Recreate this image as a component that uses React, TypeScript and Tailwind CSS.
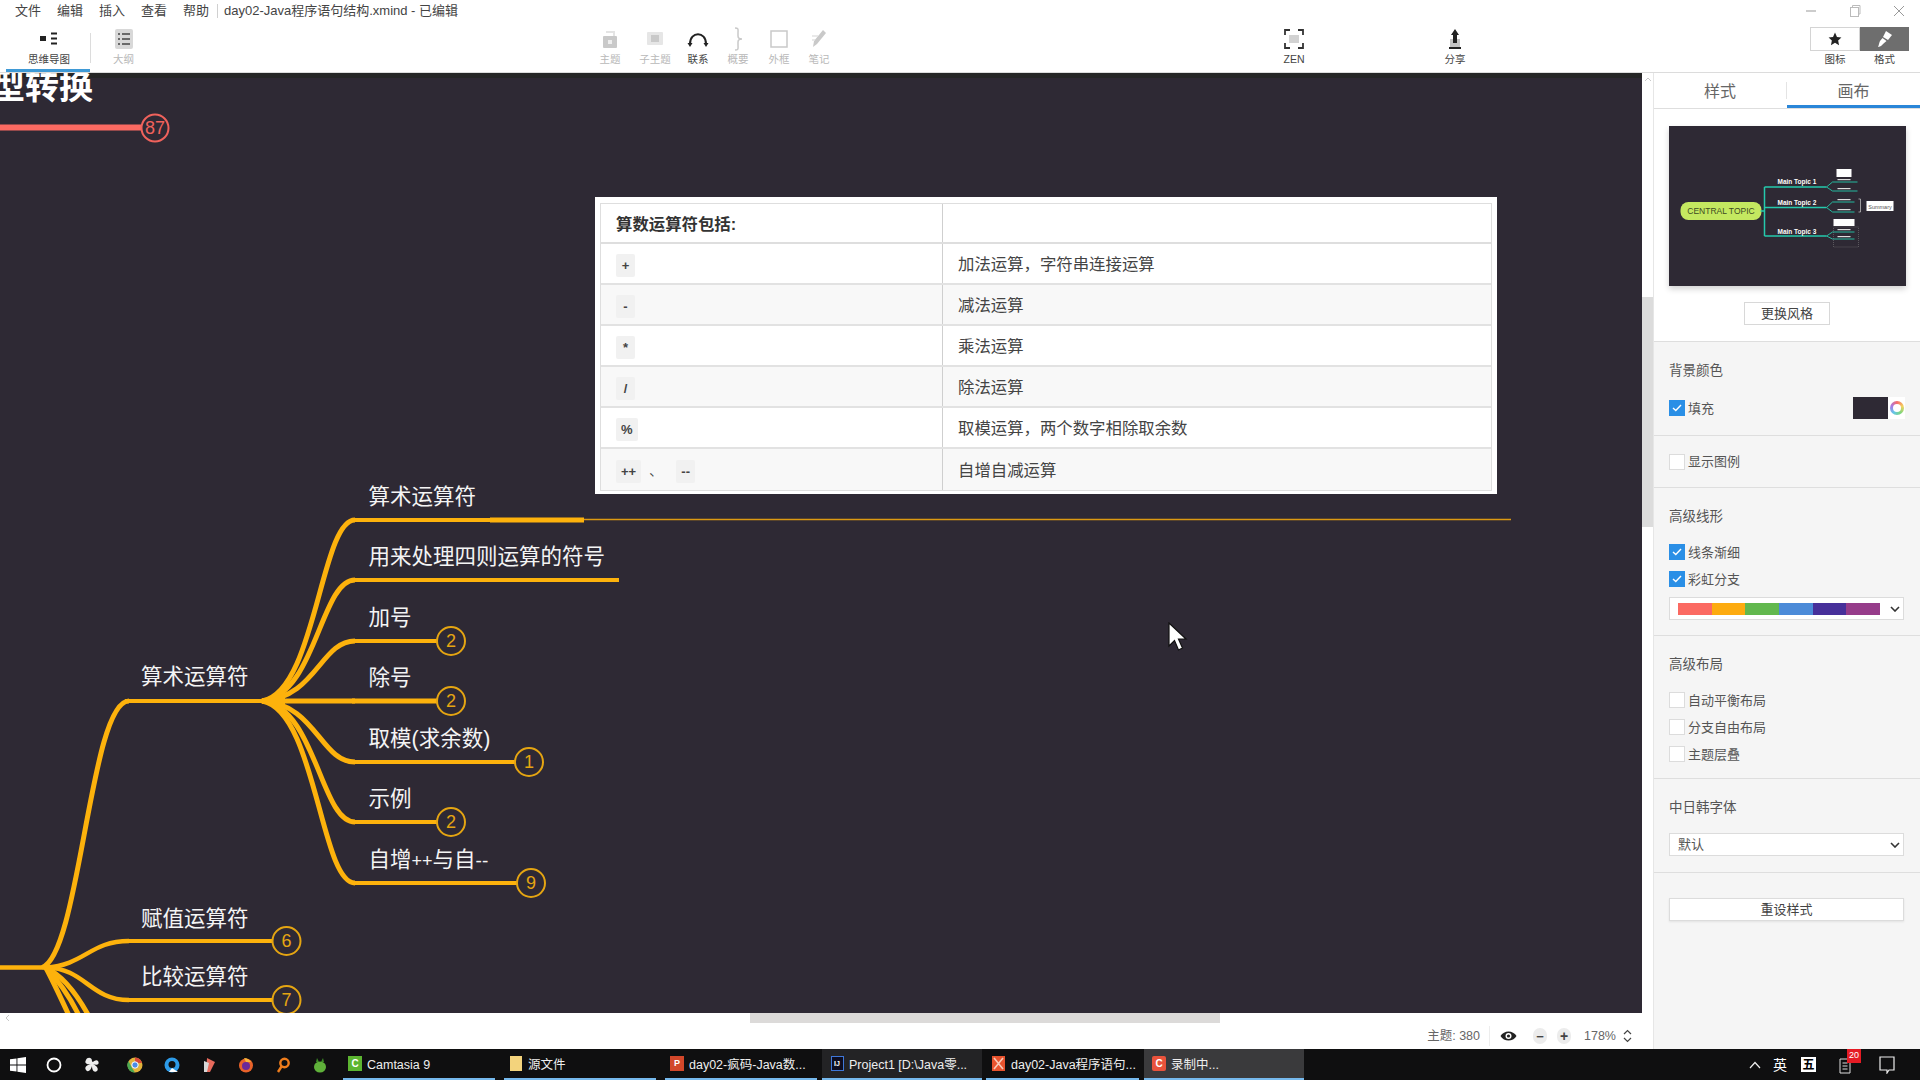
import React from "react";

const ORANGE = "#fdb20c";
const CIRCLE = "#e5a512";

function curve(x0: number, y0: number, x1: number, y1: number) {
  const dx = x1 - x0;
  return `M${x0} ${y0} C${x0 + dx * 0.58} ${y0 + (y1 - y0) * 0.05} ${x0 + dx * 0.63} ${y1} ${x1} ${y1}`;
}

const subs: { y: number; end: number; key: string; label: React.ReactNode; ty: number; n?: string; cx?: number }[] = [
  { y: 520, end: 584, key: "a", label: "算术运算符", ty: 496 },
  { y: 580, end: 619, key: "b", label: "用来处理四则运算的符号", ty: 556 },
  { y: 641, end: 440, key: "c", label: "加号", ty: 617, n: "2", cx: 451 },
  { y: 701, end: 440, key: "d", label: "除号", ty: 677, n: "2", cx: 451 },
  { y: 762, end: 518, key: "e", label: "取模(求余数)", ty: 738, n: "1", cx: 529 },
  { y: 822, end: 440, key: "f", label: "示例", ty: 798, n: "2", cx: 451 },
  {
    y: 883,
    end: 520,
    key: "g",
    label: (
      <>
        自增<span className="text-[18px]">++</span>与自<span className="text-[19px]">--</span>
      </>
    ),
    ty: 859,
    n: "9",
    cx: 531,
  },
];

function NodeText({ x, cy, children }: { x: number; cy: number; children: React.ReactNode }) {
  return (
    <div
      className="absolute whitespace-nowrap text-[21.5px] leading-[30px] text-[#f4f4f4]"
      style={{ left: x, top: cy - 14 }}
    >
      {children}
    </div>
  );
}

function MindMap() {
  return (
    <>
      <svg className="absolute left-0 top-0" width={1642} height={940} viewBox="0 73 1642 940" fill="none">
        <path d="M0 127.5 H142" stroke="#fb6a62" strokeWidth={6} />
        <circle cx={155} cy={128} r={13.5} fill="#2e2934" stroke="#f0625c" strokeWidth={2} />
        <path d="M0 967.5 H48" stroke={ORANGE} strokeWidth={4.5} />
        <path d="M42 967.5 C80 955 90 701 129 701" stroke={ORANGE} strokeWidth={5} />
        <path d="M125 701 H262" stroke={ORANGE} strokeWidth={4} />
        <path d="M46 967.5 C85 965 90 941 129 941" stroke={ORANGE} strokeWidth={4.5} />
        <path d="M125 941 H275" stroke={ORANGE} strokeWidth={4} />
        <path d="M46 967.5 C85 968 90 1000 129 1000" stroke={ORANGE} strokeWidth={4.5} />
        <path d="M125 1000 H275" stroke={ORANGE} strokeWidth={4} />
        <path d="M46 968 C62 975 78 995 92 1022" stroke={ORANGE} strokeWidth={5} />
        <path d="M46 968 C58 980 72 1000 82 1022" stroke={ORANGE} strokeWidth={5} />
        <path d="M46 968 C55 985 64 1005 72 1022" stroke={ORANGE} strokeWidth={5} />
        {subs.map((s) => (
          <g key={s.key}>
            <path d={curve(262, 701, 355, s.y)} stroke={ORANGE} strokeWidth={5} />
            <path d={`M352 ${s.y} H${s.end}`} stroke={ORANGE} strokeWidth={s.y === 701 ? 5 : 4} />
            {s.n && <circle cx={s.cx} cy={s.y} r={14} fill="#2e2934" stroke={CIRCLE} strokeWidth={2} />}
          </g>
        ))}
        <path d="M490 520 H584" stroke={ORANGE} strokeWidth={5} />
        <path d="M584 519.5 H1511" stroke="#dd9a12" strokeWidth={1.5} />
        <circle cx={286.5} cy={941} r={14} fill="#2e2934" stroke={CIRCLE} strokeWidth={2} />
        <circle cx={286.5} cy={1000} r={14} fill="#2e2934" stroke={CIRCLE} strokeWidth={2} />
        <path d="M255 701 L285 694 L285 708 Z" fill={ORANGE} />
      </svg>

      <div className="absolute left-[-9px] top-[-4px] whitespace-nowrap text-[34px] font-bold leading-[36px] text-white">型转换</div>
      <div className="absolute left-[141px] top-[41px] w-[28px] text-center text-[18px] leading-[28px] text-[#f0625c]">87</div>

      <NodeText x={141} cy={603}>算术运算符</NodeText>
      <NodeText x={141} cy={845}>赋值运算符</NodeText>
      <NodeText x={141} cy={903}>比较运算符</NodeText>
      {subs.map((s) => (
        <NodeText key={s.key} x={368.5} cy={s.ty - 73}>{s.label}</NodeText>
      ))}
      {subs.filter((s) => s.n).map((s) => (
        <div
          key={s.key + "n"}
          className="absolute w-[28px] text-center text-[18px] leading-[28px] text-[#e5a512]"
          style={{ left: s.cx! - 14, top: s.y - 73 - 14 }}
        >
          {s.n}
        </div>
      ))}
      <div className="absolute left-[272.5px] top-[854px] w-[28px] text-center text-[18px] leading-[28px] text-[#e5a512]">6</div>
      <div className="absolute left-[272.5px] top-[913px] w-[28px] text-center text-[18px] leading-[28px] text-[#e5a512]">7</div>
    </>
  );
}

const rows: { code: string[]; text: string }[] = [
  { code: ["+"], text: "加法运算，字符串连接运算" },
  { code: ["-"], text: "减法运算" },
  { code: ["*"], text: "乘法运算" },
  { code: ["/"], text: "除法运算" },
  { code: ["%"], text: "取模运算，两个数字相除取余数" },
  { code: ["++", "--"], text: "自增自减运算" },
];

function Chip({ children }: { children: React.ReactNode }) {
  return (
    <span className="mt-[2px] inline-flex h-[23px] min-w-[19px] items-center justify-center rounded-[2px] bg-[#f1f1f1] px-[5px] text-[13px] font-bold text-[#444]">
      {children}
    </span>
  );
}

function NoteTable() {
  return (
    <div className="absolute left-[595px] top-[124px] box-border h-[297px] w-[902px] bg-white px-[5px] pb-[3px] pt-[6px]">
      <div className="h-full border border-[#dedede] text-[16.4px] text-[#444]">
        <div className="flex h-[40px] border-b-2 border-[#dedede]">
          <div className="flex w-[342px] items-center border-r border-[#cfcfcf] pl-[15px] pt-[2px] font-bold text-[#333]">算数运算符包括:</div>
          <div className="flex-1" />
        </div>
        {rows.map((r, i) => (
          <div
            key={r.text}
            className={`flex h-[41px] border-b-2 border-[#e2e2e2] last:border-b-0 ${i % 2 === 1 ? "bg-[#f8f8f8]" : "bg-white"}`}
          >
            <div className="flex w-[342px] items-center border-r border-[#cfcfcf] pl-[15px] pt-[2px]">
              {r.code.length === 2 ? (
                <>
                  <Chip>{r.code[0]}</Chip>
                  <span className="ml-[8px] w-[27px] text-[13px]">、</span>
                  <Chip>{r.code[1]}</Chip>
                </>
              ) : (
                <Chip>{r.code[0]}</Chip>
              )}
            </div>
            <div className="flex flex-1 items-center pl-[15px] pt-[2px]">{r.text}</div>
          </div>
        ))}
      </div>
    </div>
  );
}

function Tool({ w, label, dim, children }: { w: number; label: string; dim?: boolean; children: React.ReactNode }) {
  return (
    <div className="flex shrink-0 flex-col items-center pt-[3px]" style={{ width: w }}>
      <div className="flex h-[24px] items-center justify-center">{children}</div>
      <div className={`text-[10.5px] leading-[16px] ${dim ? "text-[#b8b8b8]" : "text-[#444]"}`}>{label}</div>
    </div>
  );
}

function Header() {
  const dimIcon = "#c9c9c9";
  return (
    <div className="box-border h-[73px] shrink-0 border-b border-[#dcdcdc] bg-white">
      <div className="flex h-[24px] items-center pb-[2px] pl-[15px] text-[13px] text-[#444]">
        <span className="w-[42px]">文件</span>
        <span className="w-[42px]">编辑</span>
        <span className="w-[42px]">插入</span>
        <span className="w-[42px]">查看</span>
        <span className="w-[34px]">帮助</span>
        <span className="h-[14px] w-px bg-[#d0d0d0]" />
        <span className="ml-[6px]">day02-Java程序语句结构.xmind - 已编辑</span>
        <div className="ml-auto flex items-center pr-[15px]">
          <svg width={12} height={12} viewBox="0 0 12 12" className="mr-[32px]"><path d="M1 6H11" stroke="#999" /></svg>
          <svg width={12} height={14} viewBox="0 0 12 14" className="mr-[32px]"><rect x="1.5" y="3.5" width="8" height="9" fill="none" stroke="#bbb" /><path d="M3.5 3V1.5H11V10H10" fill="none" stroke="#bbb" /></svg>
          <svg width={12} height={12} viewBox="0 0 12 12"><path d="M1 1L11 11M11 1L1 11" stroke="#999" /></svg>
        </div>
      </div>
      <div className="flex h-[48px] pl-[6px]">
        <div className="box-border h-[48px] w-[84px] border-b-[3px] border-[#3f9ad6]">
          <Tool w={86} label="思维导图">
            <svg width={20} height={16} viewBox="0 0 20 16"><rect x="1" y="5" width="6" height="5" fill="#222" /><path d="M12 2.5H18M12 7.5H18M12 12.5H18" stroke="#222" strokeWidth="2" /></svg>
          </Tool>
        </div>
        <div className="mt-[9px] h-[30px] w-px bg-[#dcdcdc]" />
        <Tool w={65} label="大纲" dim>
          <svg width={20} height={22} viewBox="0 0 20 22"><rect x="1" y="1" width="18" height="20" rx="2" fill="#d8d8d8" /><path d="M4 6H6M8 6H16M4 11H6M8 11H16M4 16H6M8 16H16" stroke="#444" strokeWidth="1.6" /></svg>
        </Tool>
        <div className="w-[432px] shrink-0" />
        <Tool w={44} label="主题" dim>
          <svg width={18} height={20} viewBox="0 0 18 20"><path d="M5 3H13V7" fill="none" stroke="#e4e4e4" strokeWidth="2" /><rect x="2" y="7" width="14" height="12" rx="1" fill={dimIcon} /><rect x="7" y="11" width="4" height="4" fill="#eee" /></svg>
        </Tool>
        <Tool w={46} label="子主题" dim>
          <svg width={20} height={20} viewBox="0 0 20 20"><rect x="2" y="3" width="16" height="13" rx="1" fill="#e6e6e6" /><rect x="6" y="6" width="8" height="7" fill={dimIcon} /></svg>
        </Tool>
        <Tool w={40} label="联系">
          <svg width={22} height={18} viewBox="0 0 22 18" fill="none"><path d="M3 14C3 1 19 1 19 14" stroke="#222" strokeWidth="2" /><path d="M0.5 13L3 17L5.5 13ZM16.5 13L19 17L21.5 13Z" fill="#222" /></svg>
        </Tool>
        <Tool w={40} label="概要" dim>
          <svg width={12} height={24} viewBox="0 0 12 24" fill="none"><path d="M3 1C7 1 6 3 6 6V9C6 11 7 12 10 12C7 12 6 13 6 15V18C6 21 7 23 3 23" stroke={dimIcon} strokeWidth="1.5" /></svg>
        </Tool>
        <Tool w={42} label="外框" dim>
          <svg width={20} height={20} viewBox="0 0 20 20" fill="none"><rect x="2" y="2" width="16" height="16" stroke={dimIcon} strokeWidth="1.5" /></svg>
        </Tool>
        <Tool w={38} label="笔记" dim>
          <svg width={18} height={22} viewBox="0 0 18 22" fill="none"><path d="M13 2L16 5L7 16L3 19L4 13Z" fill={dimIcon} /><path d="M2 8H8M2 12H5" stroke="#e2e2e2" strokeWidth="1.5" /></svg>
        </Tool>
        <div className="w-[436px] shrink-0" />
        <Tool w={40} label="ZEN">
          <svg width={20} height={20} viewBox="0 0 20 20" fill="none"><path d="M1 6V1H6M14 1H19V6M19 14V19H14M6 19H1V14" stroke="#333" strokeWidth="1.8" /><rect x="5" y="6" width="10" height="8" fill="#d2d2d2" /></svg>
        </Tool>
        <div className="w-[121px] shrink-0" />
        <Tool w={40} label="分享">
          <svg width={16} height={22} viewBox="0 0 16 22"><rect x="3" y="11" width="10" height="8" fill="#c4c4c4" /><path d="M8 1L12 7H10V15H6V7H4Z" fill="#222" /><rect x="2" y="19" width="12" height="2" fill="#222" /></svg>
        </Tool>
        <div className="w-[335px] shrink-0" />
        <div className="flex flex-col">
          <div className="mt-[3px] box-border flex h-[24px] w-[99px]">
            <div className="flex w-[50px] items-center justify-center border border-[#d4d4d4] bg-white">
              <svg width={14} height={14} viewBox="0 0 24 24"><path d="M12 1L15.4 8.4L23 9.3L17.4 14.7L18.9 22.5L12 18.6L5.1 22.5L6.6 14.7L1 9.3L8.6 8.4Z" fill="#222" /></svg>
            </div>
            <div className="flex w-[49px] items-center justify-center bg-[#6e6e6e]">
              <svg width={16} height={18} viewBox="0 0 16 18"><path d="M9 1L15 5L11 10L6 7Z" fill="#fff" /><path d="M5.5 8L9.5 11L6 14C5 16 2 17 1 17C2 15 2 13 3 11Z" fill="#fff" /></svg>
            </div>
          </div>
          <div className="flex text-[10.5px] leading-[16px] text-[#444]">
            <span className="w-[50px] text-center">图标</span>
            <span className="w-[49px] text-center">格式</span>
          </div>
        </div>
      </div>
    </div>
  );
}

function Check({ on, label }: { on?: boolean; label: string }) {
  return (
    <div className="flex h-[22px] items-center pt-[1px] text-[13px] text-[#555]">
      <span className={`mr-[3px] mb-[1px] flex h-[16px] w-[16px] items-center justify-center ${on ? "bg-[#2a8fe6]" : "border border-[#dcdcdc] bg-white"}`}>
        {on && (
          <svg width={10} height={8} viewBox="0 0 10 8" fill="none"><path d="M1 4L3.8 6.6L9 1" stroke="#fff" strokeWidth="1.4" /></svg>
        )}
      </span>
      {label}
    </div>
  );
}

function Caret() {
  return (
    <svg width={10} height={6} viewBox="0 0 10 6" fill="none"><path d="M1 1L5 5L9 1" stroke="#333" strokeWidth="1.6" /></svg>
  );
}

function Title({ children }: { children: React.ReactNode }) {
  return <div className="h-[20px] text-[13.5px] leading-[20px] text-[#555]">{children}</div>;
}

function Preview() {
  const teal = "#25c9ac";
  return (
    <svg width={237} height={160} viewBox="0 0 237 160" className="block" fill="none">
      <rect width={237} height={160} fill="#2e2934" />
      <g transform="translate(-1.5 0)">
        <rect x={13} y={76} width={81} height={18} rx={8} fill="#c4e860" />
        <text x={53.5} y={88} textAnchor="middle" fontSize={8.5} fill="#3c4a22" fontFamily="Liberation Sans">CENTRAL TOPIC</text>
        <path d="M93 85H97M97 61V110M97 61H159M97 81.5H159M97 110H159" stroke={teal} strokeWidth={1.5} />
        <path d="M159 61L165 56H190M159 61L165 65H190M159 81.5L165 76H187M159 81.5L165 86H187M159 110L165 106H187M159 110L165 113H187" stroke={teal} strokeWidth={0.9} />
        <text x={110} y={58} fontSize={6.5} fontWeight={700} fill="#fff" fontFamily="Liberation Sans">Main Topic 1</text>
        <text x={110} y={79} fontSize={6.5} fontWeight={700} fill="#fff" fontFamily="Liberation Sans">Main Topic 2</text>
        <text x={110} y={108} fontSize={6.5} fontWeight={700} fill="#fff" fontFamily="Liberation Sans">Main Topic 3</text>
        <rect x={169} y={43} width={15} height={8} fill="#fff" />
        <rect x={170} y={53} width={13} height={1.2} fill="#ddd" />
        <rect x={170} y={62} width={13} height={1.2} fill="#ddd" />
        <rect x={170} y={73} width={13} height={1.2} fill="#ddd" />
        <rect x={170} y={83} width={13} height={1.2} fill="#ddd" />
        <path d="M191 73H193V86H191" stroke="#ccc" strokeWidth={0.7} />
        <rect x={199} y={75} width={27} height={10} fill="#fff" />
        <text x={212.5} y={82.5} textAnchor="middle" fontSize={5.5} fill="#555" fontFamily="Liberation Sans">Summary</text>
        <rect x={166} y={93} width={21} height={7} fill="#fff" />
        <rect x={166} y={101} width={25} height={20} stroke="#888" strokeWidth={0.5} strokeDasharray="1 1" />
        <rect x={170} y={103} width={13} height={1.2} fill="#ddd" />
        <rect x={170} y={110} width={13} height={1.2} fill="#ddd" />
      </g>
    </svg>
  );
}

function Panel() {
  return (
    <div className="flex w-[267px] shrink-0 flex-col border-l border-[#e6e6e6] bg-[#f5f5f5]">
      <div className="flex h-[36px] shrink-0 border-b border-[#dedede] bg-white text-[16px] text-[#666]">
        <div className="flex w-[132px] items-center justify-center pt-[2px]">
          样式
        </div>
        <div className="my-[9px] w-px bg-[#e4e4e4]" />
        <div className="flex flex-1 items-center justify-center border-b-[3px] border-[#2a86d8] pt-[5px]">画布</div>
      </div>
      <div className="box-border flex h-[233px] shrink-0 flex-col items-center border-b border-[#dedede] bg-white pt-[17px]">
        <div className="shadow-[0_3px_6px_rgba(0,0,0,0.18)]">
          <Preview />
        </div>
        <div className="mt-[16px] box-border flex h-[23px] w-[86px] items-center justify-center border border-[#d8d8d8] bg-white pt-[1px] text-[13px] text-[#444]">更换风格</div>
      </div>
      <div className="box-border h-[94px] shrink-0 border-b border-[#dedede] px-[15px] pt-[19px]">
        <Title>背景颜色</Title>
        <div className="mt-[16px] flex items-center justify-between">
          <Check on label="填充" />
          <div className="flex h-[22px] items-center">
            <div className="h-[22px] w-[35px] bg-[#2e2934]" />
            <div className="flex h-[22px] w-[17px] items-center justify-center bg-white">
              <div className="h-[14px] w-[14px] rounded-full bg-[conic-gradient(#f76b6b,#f4d35e,#7ed67e,#63c6e8,#a57be8,#f76b6b)] p-[3px]">
                <div className="h-full w-full rounded-full bg-white" />
              </div>
            </div>
          </div>
        </div>
      </div>
      <div className="box-border flex h-[52px] shrink-0 items-center border-b border-[#dedede] pl-[15px]">
        <Check label="显示图例" />
      </div>
      <div className="box-border h-[148px] shrink-0 border-b border-[#dedede] pl-[15px] pt-[19px]">
        <Title>高级线形</Title>
        <div className="mt-[14px]"><Check on label="线条渐细" /></div>
        <div className="mt-[5px]"><Check on label="彩虹分支" /></div>
        <div className="mt-[7px] box-border flex h-[23px] w-[235px] items-center border border-[#dcdcdc] bg-white pl-[8px] pr-[3px]">
          <div className="flex h-[12px] w-[202px]">
            <div className="flex-1 bg-[#fb6a62]" />
            <div className="flex-1 bg-[#fdab10]" />
            <div className="flex-1 bg-[#62b84e]" />
            <div className="flex-1 bg-[#4c8bd8]" />
            <div className="flex-1 bg-[#47309a]" />
            <div className="flex-1 bg-[#963c8a]" />
          </div>
          <div className="ml-auto flex"><Caret /></div>
        </div>
      </div>
      <div className="box-border h-[143px] shrink-0 border-b border-[#dedede] pl-[15px] pt-[19px]">
        <Title>高级布局</Title>
        <div className="mt-[14px]"><Check label="自动平衡布局" /></div>
        <div className="mt-[5px]"><Check label="分支自由布局" /></div>
        <div className="mt-[5px]"><Check label="主题层叠" /></div>
      </div>
      <div className="box-border h-[94px] shrink-0 border-b border-[#dedede] pl-[15px] pt-[19px]">
        <Title>中日韩字体</Title>
        <div className="mt-[15px] box-border flex h-[23px] w-[235px] items-center justify-between border border-[#dcdcdc] bg-white pt-[1px] pl-[8px] pr-[3px] text-[13px] text-[#555]">
          默认
          <Caret />
        </div>
      </div>
      <div className="pl-[15px] pt-[25px]">
        <div className="box-border flex h-[23px] w-[235px] items-center justify-center border border-[#dcdcdc] bg-white pt-[1px] text-[13px] text-[#444] shadow-[0_1px_2px_rgba(0,0,0,0.08)]">重设样式</div>
      </div>
    </div>
  );
}

function StatusBar() {
  return (
    <div className="flex h-[26px] shrink-0 items-center justify-end bg-white pr-[21px] text-[12.5px] text-[#666]">
      <span>主题: 380</span>
      <span className="ml-[9px] mr-[10px] h-[20px] w-px bg-[#ededed]" />
      <svg width={17} height={12} viewBox="0 0 17 12" className="mr-[16px]">
        <path d="M0.5 6C4 0 13 0 16.5 6C13 12 4 12 0.5 6Z" fill="#222" />
        <circle cx={8.5} cy={6} r={3} fill="#fff" />
        <circle cx={8.5} cy={6} r={1.6} fill="#222" />
      </svg>
      <span className="flex h-[16px] w-[14px] items-center justify-center rounded-full bg-[#ececec] text-[13px] font-bold leading-none text-[#444]">−</span>
      <span className="ml-[10px] flex h-[16px] w-[14px] items-center justify-center rounded-full bg-[#ececec] text-[14px] font-bold leading-none text-[#444]">+</span>
      <span className="ml-[13px] mr-[7px]">178%</span>
      <svg width={9} height={14} viewBox="0 0 9 14" fill="none"><path d="M1 5L4.5 1.5L8 5M1 9L4.5 12.5L8 9" stroke="#444" strokeWidth="1.2" /></svg>
    </div>
  );
}

function TaskBtn({ w, ml, label, bg, icon, pl = 5, gap = 5 }: { w: number; ml: number; label: string; bg?: string; icon: React.ReactNode; pl?: number; gap?: number }) {
  return (
    <div
      className="box-border flex h-[31px] shrink-0 items-center border-b-2 border-[#76b9ed] text-[12.5px] text-[#eeeeee]"
      style={{ width: w, marginLeft: ml, backgroundColor: bg, paddingLeft: pl }}
    >
      <span className="flex w-[14px] items-center justify-center" style={{ marginRight: gap }}>{icon}</span>
      <span className="whitespace-nowrap pt-[3px]">{label}</span>
    </div>
  );
}

function Taskbar() {
  return (
    <div className="flex h-[31px] shrink-0 items-center bg-[#0f0f10]">
      <div className="flex w-[343px] shrink-0 items-center">
        <svg width={16} height={16} viewBox="0 0 16 16" className="ml-[10px]"><path d="M0 2.3L6.5 1.4V7.5H0ZM7.4 1.3L16 0V7.5H7.4ZM0 8.5H6.5V14.6L0 13.7ZM7.4 8.5H16V16L7.4 14.7Z" fill="#fff" /></svg>
        <svg width={16} height={16} viewBox="0 0 16 16" className="ml-[20px]" fill="none"><circle cx={8} cy={8} r={6.5} stroke="#fff" strokeWidth="1.8" /></svg>
        <svg width={16} height={16} viewBox="0 0 16 16" className="ml-[22px]"><path d="M7 7C3 8 0 6 2 3C3 0 8 0 8 4C8 7 12 1 14 4C16 7 13 9 9 7C13 9 15 12 13 14C10 16 8 13 8 9C7 13 4 16 2 13C0 10 3 8 7 7Z" fill="#eee" /></svg>
        <svg width={16} height={16} viewBox="0 0 16 16" className="ml-[27px]"><circle cx={8} cy={8} r={7.5} fill="#e2b23a" /><path d="M8 0.5A7.5 7.5 0 0 1 15 6H8Z" fill="#d9483b" /><path d="M1.5 4L5 11L8 15.5A7.5 7.5 0 0 1 1.5 4Z" fill="#4aa852" /><circle cx={8} cy={8} r={3.2} fill="#4b8ce8" stroke="#fff" /></svg>
        <svg width={16} height={16} viewBox="0 0 16 16" className="ml-[21px]"><circle cx={8} cy={8} r={7.5} fill="#2d9be8" /><circle cx={8} cy={7.5} r={3.5} fill="#111" /><path d="M8 11L14 15H5Z" fill="#fff" /></svg>
        <svg width={16} height={16} viewBox="0 0 16 16" className="ml-[21px]"><path d="M6 1L14 5L9 15H5Z" fill="#e86a5c" /><path d="M3 4L8 6L6 15H3Z" fill="#d8d8d8" /></svg>
        <svg width={16} height={16} viewBox="0 0 16 16" className="ml-[21px]"><circle cx={8} cy={8.5} r={7} fill="#e8622a" /><circle cx={8} cy={9} r={4} fill="#6a2a9a" /><path d="M6 1C9 1 12 3 13 5L8 5Z" fill="#f6b73c" /></svg>
        <svg width={16} height={16} viewBox="0 0 16 16" className="ml-[21px]" fill="none"><circle cx={9.5} cy={6} r={4.2} stroke="#ef7d1c" strokeWidth="2.4" /><path d="M6.5 9.5L3 15" stroke="#ef7d1c" strokeWidth="2.4" /></svg>
        <svg width={16} height={16} viewBox="0 0 16 16" className="ml-[21px]"><ellipse cx={8} cy={10} rx={6} ry={5.5} fill="#5fb13a" /><path d="M5 1L7 5H4ZM11 1L12 5H9Z" fill="#3d8e26" /></svg>
      </div>
      <TaskBtn w={152} ml={0} label="Camtasia 9" icon={<span className="flex h-[15px] w-[14px] items-center justify-center bg-[#5cb531] text-[10px] font-bold leading-none text-white">C</span>} />
      <TaskBtn w={152} ml={9} label="源文件" icon={<span className="block h-[15px] w-[12px] bg-[#f3d37c]" />} />
      <TaskBtn w={152} ml={9} label="day02-疯码-Java数..." icon={<span className="flex h-[15px] w-[14px] items-center justify-center bg-[#d2472a] text-[9px] font-bold leading-none text-white">P</span>} />
      <TaskBtn w={160} ml={5} pl={8} bg="#232325" label="Project1 [D:\Java零..." icon={<span className="flex h-[15px] w-[13px] items-center justify-center border border-[#3f77d8] bg-[#0d0d1f] text-[7px] font-bold leading-none text-white">IJ</span>} />
      <TaskBtn w={153} ml={4} pl={5} gap={6} label="day02-Java程序语句..." icon={<svg width={13} height={15} viewBox="0 0 13 15"><rect width={13} height={15} fill="#e8532e" /><path d="M2 2L11 13M11 2L2 13" stroke="#f8c9b8" strokeWidth="1.6" /></svg>} />
      <TaskBtn w={160} ml={5} pl={8} gap={5} bg="#3a3a3c" label="录制中..." icon={<span className="flex h-[15px] w-[14px] items-center justify-center rounded-[2px] bg-[#e9533c] text-[10px] font-bold leading-none text-white">C</span>} />
      <div className="flex flex-1 items-center text-white">
        <svg width={12} height={8} viewBox="0 0 12 8" fill="none" className="ml-[445px]"><path d="M1 7L6 1.5L11 7" stroke="#eee" strokeWidth="1.2" /></svg>
        <span className="ml-[12px] pt-[2px] text-[14px]">英</span>
        <span className="ml-[14px] flex h-[15px] w-[15px] items-center justify-center bg-white pt-[1px] text-[12px] font-bold leading-none text-black">五</span>
        <div className="relative ml-[23px]">
          <svg width={16} height={18} viewBox="0 0 16 18" fill="none"><path d="M1 3H11V17H1ZM3.5 7H8.5M3.5 10H8.5M3.5 13H8.5" stroke="#ddd" /></svg>
          <span className="absolute left-[8px] top-[-7px] flex h-[14px] w-[14px] items-center justify-center bg-[#e51b24] text-[9px] leading-none text-white">20</span>
        </div>
        <svg width={16} height={18} viewBox="0 0 16 18" fill="none" className="ml-[24px]"><path d="M1 1H15V14H10L8 17V14H1Z" stroke="#eee" strokeWidth="1.2" /></svg>
      </div>
    </div>
  );
}

export default function App() {
  return (
    <div className="flex h-[1080px] w-[1920px] flex-col overflow-hidden bg-white font-['Liberation_Sans','Noto_Sans_CJK_SC',sans-serif]">
      <Header />
      <div className="flex h-[976px] shrink-0">
        <div className="flex w-[1653px] shrink-0 flex-col">
          <div className="flex h-[940px] shrink-0">
            <div className="relative h-[940px] w-[1642px] shrink-0 overflow-hidden bg-[#2e2934]">
              <div className="absolute left-0 right-0 top-0 h-[5px] bg-[#262626]" />
              <MindMap />
              <NoteTable />
              <svg width={20} height={30} viewBox="0 0 20 30" className="absolute left-[1168px] top-[549px]">
                <path d="M1 1V24L6.5 18.5L10.5 28L14.5 26L10.5 17H18Z" fill="#fff" stroke="#111" strokeWidth="1.2" />
              </svg>
            </div>
            <div className="flex h-[940px] w-[11px] flex-col bg-white">
              <div className="flex h-[224px] shrink-0 justify-center pt-[4px]">
                <svg width={8} height={5} viewBox="0 0 8 5" fill="none"><path d="M1 4L4 1L7 4" stroke="#c8c8c8" /></svg>
              </div>
              <div className="h-[230px] shrink-0 bg-[#dcdcdc]" />
            </div>
          </div>
          <div className="flex h-[10px] shrink-0 items-stretch bg-white">
            <div className="flex w-[750px] shrink-0 items-center pl-[5px]">
              <svg width={5} height={8} viewBox="0 0 5 8" fill="none"><path d="M4 1L1 4L4 7" stroke="#c8c8c8" /></svg>
            </div>
            <div className="w-[470px] shrink-0 bg-[#dcdad9]" />
          </div>
          <StatusBar />
        </div>
        <Panel />
      </div>
      <Taskbar />
    </div>
  );
}
